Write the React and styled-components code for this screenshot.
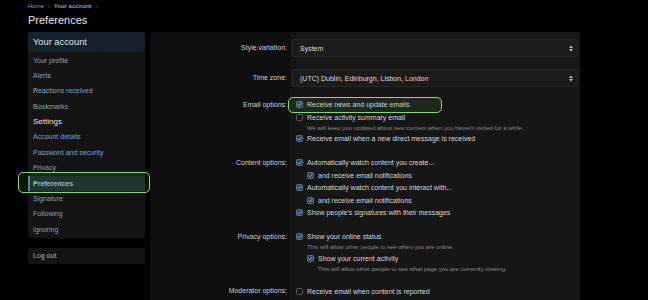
import React from "react";
import styled, { createGlobalStyle, css } from "styled-components";

const GlobalStyle = createGlobalStyle`
  body {
    margin: 0;
    background: #000;
    font-family: "Liberation Sans", Arial, sans-serif;
  }
`;

const glow = css`
  &::after {
    content: "";
    position: absolute;
    border: 1.5px solid #86d96b;
    border-radius: 5px;
    background: rgba(110, 210, 90, 0.09);
    pointer-events: none;
  }
`;

const Page = styled.div`
  width: 648px;
  height: 300px;
  overflow: hidden;
  padding-left: 28px;
  box-sizing: border-box;
`;

const Crumbs = styled.div`
  display: flex;
  align-items: center;
  gap: 4px;
  height: 11px;
  font-size: 6px;
  color: #7fa3c7;
`;

const Crumb = styled.span`
  font-weight: ${(p) => (p.$strong ? "bold" : "normal")};
`;

const Sep = styled.span`
  color: #6b7c8c;
  font-size: 5px;
`;

const Title = styled.h1`
  margin: 2px 0 5px;
  font-size: 11px;
  line-height: 14px;
  font-weight: normal;
  color: #e6e6e6;
`;

const Columns = styled.div`
  display: flex;
  gap: 5px;
  align-items: flex-start;
`;

const SideColumn = styled.div`
  width: 117px;
  display: flex;
  flex-direction: column;
  gap: 10px;
`;

const NavBlock = styled.nav`
  background: #141414;
  border-radius: 3px;
  padding-bottom: 1px;
`;

const NavHeader = styled.div`
  height: 20px;
  line-height: 20px;
  padding-left: 5px;
  font-size: 9.3px;
  color: #dfe5ea;
  background: linear-gradient(90deg, #132330, #15202a);
  border-radius: 3px 3px 0 0;
  margin-bottom: 0.5px;
`;

const NavSection = styled.div`
  height: 15.4px;
  line-height: 15.4px;
  padding-left: 5px;
  font-size: 8px;
  color: #e2e2e2;
`;

const NavItem = styled.div`
  position: relative;
  height: 15.4px;
  line-height: 15.4px;
  padding-left: ${(p) => (p.$active ? "3px" : "5px")};
  font-size: 7px;
  color: ${(p) => (p.$active ? "#9fbcd6" : "#7fa3c7")};
  font-weight: ${(p) => (p.$active ? "bold" : "normal")};
  ${(p) =>
    p.$active &&
    css`
      background: #16272c;
      border-left: 2px solid #4f7fa6;
    `}
  ${(p) =>
    p.$glow &&
    css`
      ${glow}
      &::after {
        left: -12px;
        right: -5px;
        top: -4px;
        bottom: -1.5px;
      }
    `}
`;

const LogOut = styled.div`
  height: 16px;
  line-height: 16px;
  padding-left: 5px;
  font-size: 7px;
  color: #9fb5cb;
  background: #141414;
  border-radius: 3px;
`;

const Main = styled.main`
  width: 430px;
  background: #0e0e0e;
  border-radius: 3px 3px 0 0;
  padding-bottom: 20px;
`;

const Row = styled.div`
  display: grid;
  grid-template-columns: 140px 1fr;
`;

const Label = styled.div`
  padding: ${(p) => p.$top}px 3px ${(p) => p.$bottom}px 0;
  text-align: right;
  font-size: 7px;
  line-height: ${(p) => p.$lh}px;
  color: #cfcfcf;
`;

const Field = styled.div`
  background: #161616;
  padding: ${(p) => p.$top}px 2px ${(p) => p.$bottom}px;
`;

const Select = styled.div`
  height: 18px;
  box-sizing: border-box;
  display: flex;
  align-items: center;
  justify-content: space-between;
  padding: 0 4px 0 7px;
  background: #1b1b1b;
  border: 1px solid #252525;
  border-radius: 2px;
  font-size: 7px;
  color: #dedede;
`;

const CheckList = styled.div`
  padding-left: 4px;
`;

const CheckItem = styled.div`
  position: relative;
  display: flex;
  align-items: center;
  gap: 4px;
  width: max-content;
  height: 12.5px;
  margin-left: ${(p) => (p.$indent ? "11px" : "0")};
  font-size: 7px;
  color: #d6d6d6;
  ${(p) =>
    p.$glow &&
    css`
      ${glow}
      &::after {
        left: -8px;
        right: -32px;
        top: -1.5px;
        bottom: -2.2px;
      }
    `}
`;

const Box = styled.span`
  width: 7px;
  height: 7px;
  box-sizing: border-box;
  border-radius: 1.5px;
  display: flex;
  align-items: center;
  justify-content: center;
  border: 1px solid ${(p) => (p.$on ? "#56779a" : "#5a5a5a")};
  background: ${(p) => (p.$on ? "#2c4158" : "#181818")};
`;

const Hint = styled.div`
  padding-left: ${(p) => (p.$indent ? "22px" : "11px")};
  font-size: 6px;
  line-height: 9px;
  color: #8a8a8a;
`;

function Arrows() {
  return (
    <svg width="4" height="7" viewBox="0 0 4 7">
      <path d="M0 3 L2 0.5 L4 3 Z M0 4 L2 6.5 L4 4 Z" fill="#bdbdbd" />
    </svg>
  );
}

function Check({ on, indent, glow: g, children }) {
  return (
    <CheckItem $indent={indent} $glow={g}>
      <Box $on={on}>
        {on && (
          <svg width="5" height="5" viewBox="0 0 5 5">
            <path d="M0.8 2.6 L2 3.8 L4.2 1.1" stroke="#a9c2da" strokeWidth="0.9" fill="none" />
          </svg>
        )}
      </Box>
      {children}
    </CheckItem>
  );
}

const navTop = ["Your profile", "Alerts", "Reactions received", "Bookmarks"];
const navSettings = [
  "Account details",
  "Password and security",
  "Privacy",
  "Preferences",
  "Signature",
  "Following",
  "Ignoring",
];

export default function App() {
  return (
    <Page>
      <GlobalStyle />
      <Crumbs>
        <Crumb>Home</Crumb>
        <Sep>›</Sep>
        <Crumb $strong>Your account</Crumb>
        <Sep>›</Sep>
      </Crumbs>
      <Title>Preferences</Title>
      <Columns>
        <SideColumn>
          <NavBlock>
            <NavHeader>Your account</NavHeader>
            {navTop.map((n) => (
              <NavItem key={n}>{n}</NavItem>
            ))}
            <NavSection>Settings</NavSection>
            {navSettings.map((n) => (
              <NavItem key={n} $active={n === "Preferences"} $glow={n === "Preferences"}>
                {n}
              </NavItem>
            ))}
          </NavBlock>
          <LogOut>Log out</LogOut>
        </SideColumn>

        <Main>
          <Row>
            <Label $top={7} $bottom={6} $lh={18}>Style variation:</Label>
            <Field $top={7} $bottom={6}>
              <Select>
                System
                <Arrows />
              </Select>
            </Field>
          </Row>
          <Row>
            <Label $top={6} $bottom={6} $lh={18}>Time zone:</Label>
            <Field $top={6} $bottom={6}>
              <Select>
                (UTC) Dublin, Edinburgh, Lisbon, London
                <Arrows />
              </Select>
            </Field>
          </Row>
          <Row>
            <Label $top={5.5} $bottom={6} $lh={12.5}>Email options:</Label>
            <Field $top={5.5} $bottom={6}>
              <CheckList>
                <Check on glow>Receive news and update emails</Check>
                <Check>Receive activity summary email</Check>
                <Hint>We will keep you updated about new content when you haven't visited for a while.</Hint>
                <Check on>Receive email when a new direct message is received</Check>
              </CheckList>
            </Field>
          </Row>
          <Row>
            <Label $top={5.5} $bottom={6} $lh={12.5}>Content options:</Label>
            <Field $top={5.5} $bottom={6}>
              <CheckList>
                <Check on>Automatically watch content you create...</Check>
                <Check on indent>and receive email notifications</Check>
                <Check on>Automatically watch content you interact with...</Check>
                <Check on indent>and receive email notifications</Check>
                <Check on>Show people's signatures with their messages</Check>
              </CheckList>
            </Field>
          </Row>
          <Row>
            <Label $top={5.5} $bottom={6} $lh={12.5}>Privacy options:</Label>
            <Field $top={5.5} $bottom={6}>
              <CheckList>
                <Check on>Show your online status</Check>
                <Hint>This will allow other people to see when you are online.</Hint>
                <Check on indent>Show your current activity</Check>
                <Hint $indent>This will allow other people to see what page you are currently viewing.</Hint>
              </CheckList>
            </Field>
          </Row>
          <Row>
            <Label $top={5.5} $bottom={6} $lh={12.5}>Moderator options:</Label>
            <Field $top={5.5} $bottom={6}>
              <CheckList>
                <Check>Receive email when content is reported</Check>
              </CheckList>
            </Field>
          </Row>
        </Main>
      </Columns>
    </Page>
  );
}
